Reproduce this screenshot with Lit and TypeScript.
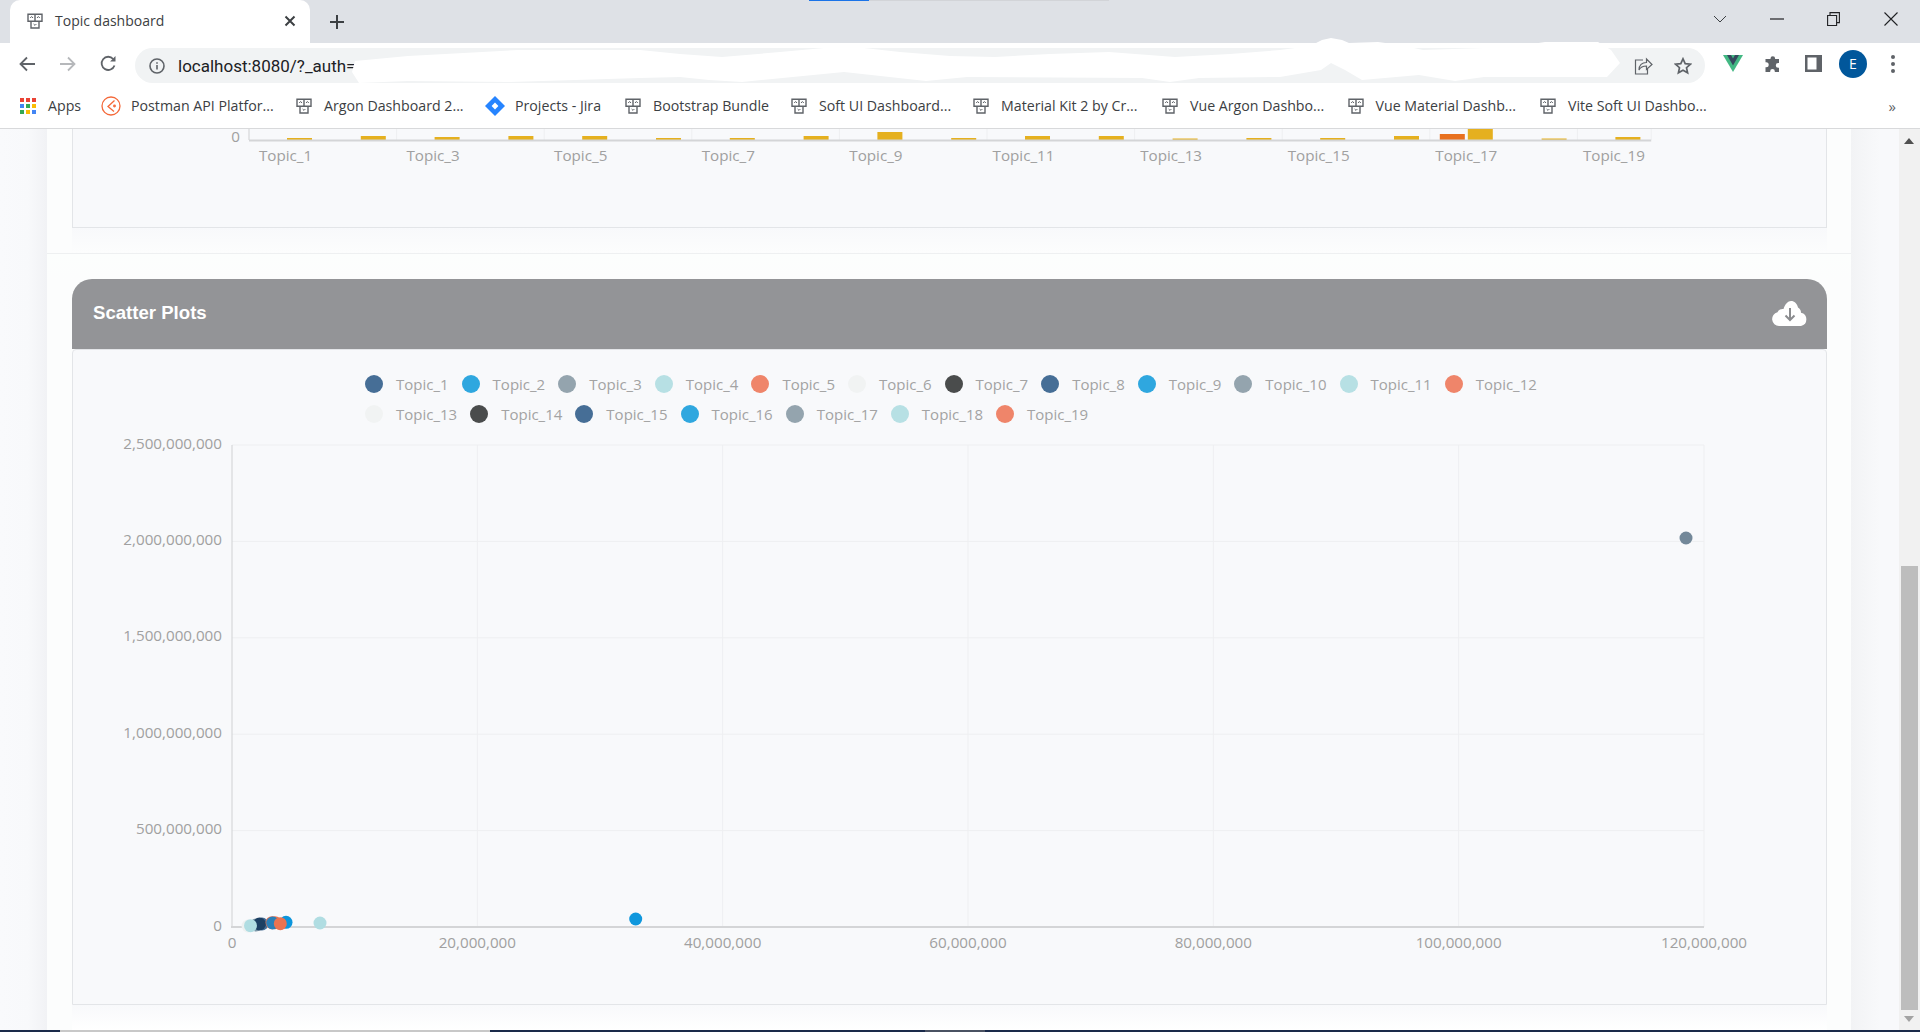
import { LitElement, html, css, svg } from 'lit';
import { customElement } from 'lit/decorators.js';

const TOPIC_COLORS = ['#466e96', '#2fa7df', '#94a4ae', '#b7e0e4', '#ef856a', '#f1f3f3', '#4a4c4c'];

// widths keep each bookmark at the same place as in the bar
const BOOKMARKS = [
  { icon: 'apps', label: 'Apps', width: 81 },
  { icon: 'postman', label: 'Postman API Platfor...', width: 195 },
  { icon: 'fav', label: 'Argon Dashboard 2...', width: 189 },
  { icon: 'jira', label: 'Projects - Jira', width: 140 },
  { icon: 'fav', label: 'Bootstrap Bundle', width: 166 },
  { icon: 'fav', label: 'Soft UI Dashboard...', width: 182 },
  { icon: 'fav', label: 'Material Kit 2 by Cr...', width: 189 },
  { icon: 'fav', label: 'Vue Argon Dashbo...', width: 185.5 },
  { icon: 'fav', label: 'Vue Material Dashb...', width: 192.5 },
  { icon: 'fav', label: 'Vite Soft UI Dashbo...', width: 180 },
];

// bar heights in px, per topic
const BAR_HEIGHTS = [2, 4, 3, 4, 4, 2, 2, 4, 8, 2, 4, 4, 1.5, 2, 2, 4, 12, 1.5, 3];

const SCATTER_POINTS = [
  [248, 926, '#eef1f1'], [256, 925, '#7d97a8'], [262, 924, '#466e96'], [259.5, 924, '#1c3f63'],
  [250.5, 925.7, '#b0dde2'], [272, 922.7, '#ea7350'], [275, 922.7, '#ea7350'], [272.7, 923, '#2a80b8'],
  [286, 922.3, '#0b95dc'], [280.3, 923.7, '#ea7350'], [320, 923, '#b0dde2'], [635.7, 919, '#0f97dd'],
  [1686, 538, '#738899'],
] as [number, number, string][];

const favicon = html`<svg class="ico16" viewBox="0 0 16 16" fill="none" stroke="#5f6368" stroke-width="1.4">
  <path d="M1 1.200h14v7H1zM8 1.200v7M4 8.200h8V15H4z"/>
  <path d="M3.200 5l1.400-1.500L6 5M10 5l1.400-1.500L12.800 5M6.600 11l1.400 1.400L9.400 11" stroke-width="1"/>
</svg>`;

const bookmarkIcons: Record<string, unknown> = {
  fav: favicon,
  apps: html`<svg class="ico16" viewBox="0 0 16 16">
    <g fill="#ea4335"><rect x="0" y="0" width="4" height="4"/><rect x="6" y="0" width="4" height="4"/><rect x="12" y="0" width="4" height="4"/></g>
    <rect x="0" y="6" width="4" height="4" fill="#4285f4"/><rect x="6" y="6" width="4" height="4" fill="#34a853"/><rect x="12" y="6" width="4" height="4" fill="#fbbc04"/>
    <rect x="0" y="12" width="4" height="4" fill="#34a853"/><rect x="6" y="12" width="4" height="4" fill="#fbbc04"/><rect x="12" y="12" width="4" height="4" fill="#4285f4"/>
  </svg>`,
  postman: html`<svg class="ico20" viewBox="0 0 20 20" fill="none" stroke="#f4693a" stroke-width="1.3">
    <circle cx="10" cy="10" r="9"/><path d="M13.500 4.500L7 10.500l6 5"/><circle cx="13.500" cy="10" r="0.800"/>
  </svg>`,
  jira: html`<svg class="ico20" viewBox="0 0 20 20">
    <path d="M10 0l10 10-10 10L0 10z" fill="#2684ff"/><path d="M10 6.600l3.400 3.400-3.400 3.400L6.600 10z" fill="#fff"/>
  </svg>`,
};

@customElement('browser-chrome')
class BrowserChrome extends LitElement {
  static styles = css`
    :host { display: block; position: relative; font-family: 'Open Sans', 'Liberation Sans', sans-serif; color: #3c4043; }
    svg { display: block; flex: none; }
    .ico16 { width: 16px; height: 16px; }
    .ico20 { width: 20px; height: 20px; }
    .tabstrip { height: 43px; background: #dee1e6; display: flex; align-items: stretch; position: relative; }
    .progress { position: absolute; left: 809px; top: 0; width: 60px; height: 1px; background: #1a73e8; }
    .progress-rest { position: absolute; left: 869px; top: 0; width: 240px; height: 1px; background: #d2d4d8; }
    .tab {
      margin-left: 10px; width: 300px; background: #fff; border-radius: 10px 10px 0 0;
      display: flex; align-items: center; box-sizing: border-box; padding: 0 14px 2px 17px;
    }
    .tab-title { margin-left: 12px; font-size: 14px; flex: 1; white-space: nowrap; }
    .plus { width: 54px; display: flex; align-items: center; justify-content: center; }
    .win { margin-left: auto; display: flex; }
    .win div { width: 57px; display: flex; align-items: center; justify-content: center; padding-bottom: 6px; }
    .win div:first-child { width: 56px; }
    .win div:last-child { width: 58px; }
    .toolbar { height: 41px; background: #fff; display: flex; align-items: center; padding-left: 6px; }
    .nav { width: 41px; display: flex; justify-content: center; }
    .omni {
      flex: 1; margin-left: 6px; height: 35px; margin-top: 5px; margin-bottom: 1px; border-radius: 18px; background: #f1f3f4;
      display: flex; align-items: center; padding: 0 2px 0 14px;
    }
    .url { margin-left: 13px; font-size: 17px; white-space: nowrap; flex: 1; color: #202124; font-family: Roboto, sans-serif; }
    .omni-ico { width: 40px; display: flex; justify-content: center; }
    .actions { display: flex; margin-left: 8px; padding-right: 7px; }
    .actions > div { width: 40px; display: flex; justify-content: center; align-items: center; }
    .avatar {
      width: 28px; height: 28px; border-radius: 50%; background: #01579b; color: #fff; font-size: 14px;
      display: flex; align-items: center; justify-content: center;
    }
    .bookmarks {
      height: 44px; box-sizing: content-box; background: #fff; border-bottom: 1px solid #d8d9db;
      display: flex; align-items: center; padding-left: 20px; position: relative;
    }
    .bm { display: flex; align-items: center; gap: 12px; flex: none; font-size: 14.2px; white-space: nowrap; }
    .bm span { position: relative; top: -1px; }
    .bm.wide { gap: 10px; }
    .more { position: absolute; right: 24px; top: 12px; font-size: 15px; color: #5f6368; }
    .blob { position: absolute; left: 0; top: 0; pointer-events: none; }
  `;

  render() {
    return html`
      <div class="tabstrip">
        <div class="progress"></div><div class="progress-rest"></div>
        <div class="tab">
          ${favicon}
          <span class="tab-title">Topic dashboard</span>
          <svg width="12" height="12" viewBox="0 0 12 12" stroke="#3c4043" stroke-width="2"><path d="M1.500 1.500l9 9M10.500 1.500l-9 9"/></svg>
        </div>
        <div class="plus"><svg width="16" height="16" viewBox="0 0 16 16" stroke="#3c4043" stroke-width="2"><path d="M8 1v14M1 8h14"/></svg></div>
        <div class="win">
          <div><svg width="14" height="8" viewBox="0 0 14 8" fill="none" stroke="#3c4043"><path d="M1 1l6 6 6-6"/></svg></div>
          <div><svg width="14" height="2" viewBox="0 0 14 2" stroke="#202124" stroke-width="1.200"><path d="M0 1h14"/></svg></div>
          <div><svg width="13" height="14" viewBox="0 0 13 14" fill="none" stroke="#202124" stroke-width="1.100"><path d="M.6 3.500h9v10h-9zM3 3.500V.6h9.400v10H9.600"/></svg></div>
          <div><svg width="14" height="14" viewBox="0 0 14 14" stroke="#202124" stroke-width="1.100"><path d="M.5.5l13 13M13.500.5l-13 13"/></svg></div>
        </div>
      </div>
      <div class="toolbar">
        <div class="nav"><svg width="16" height="16" viewBox="0 0 16 16" fill="none" stroke="#5f6368" stroke-width="1.800"><path d="M16 8H2M8 1.500L1.500 8 8 14.500"/></svg></div>
        <div class="nav"><svg width="16" height="16" viewBox="0 0 16 16" fill="none" stroke="#b6b8bb" stroke-width="1.800"><path d="M0 8h14M8 1.500L14.500 8 8 14.500"/></svg></div>
        <div class="nav"><svg width="17" height="17" viewBox="0 0 17 17" fill="none" stroke="#5f6368" stroke-width="1.800"><path d="M14.500 10.500A6.600 6.600 0 1 1 13.200 4"/><path d="M15.500 1v5.400h-5.400" fill="#5f6368" stroke="none"/></svg></div>
        <div class="omni">
          <svg width="16" height="16" viewBox="0 0 16 16" fill="none" stroke="#5f6368" stroke-width="1.600"><circle cx="8" cy="8" r="7"/><path d="M8 7v4.600M8 4.200v1.600"/></svg>
          <span class="url">localhost:8080/?_auth=</span>
          <div class="omni-ico"><svg width="19" height="18" viewBox="0 0 19 18" fill="none" stroke="#5f6368" stroke-width="1.200"><path d="M9 3H1.500v14h12v-5"/><path d="M5 13c0-5 3-7.500 7.500-7.500V2L18 7.500 12.500 12.500V9C9 9 6.500 10 5 13z"/></svg></div>
          <div class="omni-ico"><svg width="18" height="18" viewBox="0 0 18 18" fill="none" stroke="#5f6368" stroke-width="1.700"><path d="M9 1.800l2.200 4.800 5.200.6-3.900 3.500 1.100 5.100L9 13.200l-4.600 2.600 1.100-5.100L1.600 7.200l5.200-.6z"/></svg></div>
        </div>
        <div class="actions">
          <div><svg width="20" height="17" viewBox="0 0 20 17"><path d="M0 0h20L10 17z" fill="#42b883"/><path d="M4 0h4l2 3.500L12 0h4L10 10.500z" fill="#35495e"/></svg></div>
          <div><svg width="18" height="18" viewBox="0 0 18 18"><path d="M6.500 3.500a2.300 2.300 0 0 1 4.600 0V4H15v4h-.8a2.400 2.400 0 0 0 0 4.800h.8V17h-4.200v-.8a2.300 2.300 0 0 0-4.600 0v.8H1.500v-4.700h.7a2.500 2.500 0 0 0 0-5h-.7V4h5z" fill="#5f6368"/></svg></div>
          <div><svg width="17" height="17" viewBox="0 0 17 17"><rect width="17" height="17" fill="#5f6368"/><rect x="2.500" y="2.500" width="9" height="12" fill="#fff"/></svg></div>
          <div><div class="avatar">E</div></div>
          <div><svg width="4" height="18" viewBox="0 0 4 18" fill="#5f6368"><circle cx="2" cy="2" r="2"/><circle cx="2" cy="9" r="2"/><circle cx="2" cy="16" r="2"/></svg></div>
        </div>
      </div>
      <div class="bookmarks">
        ${BOOKMARKS.map(b => html`<div class="bm ${b.icon === 'postman' || b.icon === 'jira' ? 'wide' : ''}" style="width:${b.width}px">${bookmarkIcons[b.icon]}<span>${b.label}</span></div>`)}
        <span class="more">»</span>
      </div>
      <svg class="blob" width="1920" height="90" viewBox="0 0 1920 90">
        <path fill="#fff" d="M355 61 408 56 518 50 640 50 680 54 722 57 780 52 824 48 864 48 900 52 950 56 995 57 1050 54 1109 52 1175 57 1230 54 1280 50 1310 46 1322 40 1331 38 1342 40 1349 43 1378 42 1400 45 1423 50 1484 48 1520 46 1545 42 1598 42 1611 50 1620 63 1607 77 1484 77 1455 81 1419 75 1362 80 1345 70 1331 63 1321 70 1280 77 1199 78 1170 82 1142 78 967 77 926 81 844 72 742 82 709 80 680 77 640 78 510 82 408 81 359 83 352 72z"/>
      </svg>
    `;
  }
}

@customElement('bar-tail')
class BarTail extends LitElement {
  static styles = css`
    :host { display: block; }
    svg { display: block; }
    text { font: 15.2px 'Open Sans', sans-serif; fill: #a0a0a0; text-anchor: middle; }
    .zero { text-anchor: end; }
  `;

  render() {
    const left = 176;
    const step = 73.8;
    const base = 11;
    return html`<svg width="1753" height="98" viewBox="0 0 1753 98">
      ${BAR_HEIGHTS.map((_, i) => i % 2 === 0 ? svg`
        <line x1=${left + i * step} x2=${left + i * step} y1="0" y2=${base} stroke="#eeeff1"/>
        <text x=${left + i * step + 36.5} y="32">Topic_${i + 1}</text>` : '')}
      <line x1=${left + 19 * step} x2=${left + 19 * step} y1="0" y2=${base} stroke="#eeeff1"/>
      ${BAR_HEIGHTS.map((h, i) => svg`<rect x=${left + i * step + 38} y=${base - h} width="25" height=${h} fill="#e5b01f"/>`)}
      <rect x=${left + 16 * step + 10} y=${base - 6} width="25" height="6" fill="#e8711f"/>
      <line x1=${left} x2=${left + 19 * step} y1=${base + .5} y2=${base + .5} stroke="#d4d5d7" stroke-width="2"/>
      <line x1=${left} x2=${left} y1="0" y2=${base} stroke="#d4d5d7"/>
      <text class="zero" x="167" y="13">0</text>
    </svg>`;
  }
}

@customElement('scatter-chart')
class ScatterChart extends LitElement {
  static styles = css`
    :host { display: block; font-family: 'Open Sans', sans-serif; }
    svg { display: block; }
    .legend { display: flex; flex-direction: column; padding: 19px 0 1px 292px; }
    .row { display: flex; height: 30px; align-items: center; gap: 13px; }
    .item { display: flex; align-items: center; gap: 13px; font-size: 15px; color: #a3a3a3; }
    .dot { width: 18px; height: 18px; border-radius: 50%; flex: none; }
    text { font: 15.2px 'Open Sans', sans-serif; fill: #a0a0a0; }
    .y { text-anchor: end; }
    .x { text-anchor: middle; }
  `;

  renderLegendRow(from: number, to: number) {
    const items = [];
    for (let n = from; n <= to; n++) {
      items.push(html`<div class="item">
        <span class="dot" style="background:${TOPIC_COLORS[(n - 1) % 7]}"></span>Topic_${n}
      </div>`);
    }
    return html`<div class="row">${items}</div>`;
  }

  render() {
    const ox = 159;
    const oy = 497;
    const stepX = 1472 / 6;
    const stepY = 482 / 5;
    const yLabels = ['0', '500,000,000', '1,000,000,000', '1,500,000,000', '2,000,000,000', '2,500,000,000'];
    const xLabels = ['0', '20,000,000', '40,000,000', '60,000,000', '80,000,000', '100,000,000', '120,000,000'];
    return html`
      <div class="legend">${this.renderLegendRow(1, 12)}${this.renderLegendRow(13, 19)}</div>
      <svg width="1753" height="574" viewBox="0 0 1753 574">
        ${yLabels.map((l, i) => svg`
          ${i > 0 ? svg`<line x1=${ox} x2=${ox + 1472} y1=${oy - i * stepY} y2=${oy - i * stepY} stroke="#eeeff1"/>` : ''}
          <text class="y" x="149" y=${oy - i * stepY + 3.5}>${l}</text>`)}
        ${xLabels.map((l, i) => svg`
          ${i > 0 ? svg`<line x1=${ox + i * stepX} x2=${ox + i * stepX} y1=${oy - 482} y2=${oy} stroke="#eeeff1"/>` : ''}
          <text class="x" x=${ox + i * stepX} y="518">${l}</text>`)}
        <line x1=${ox} x2=${ox} y1=${oy - 482} y2=${oy} stroke="#d0d1d3"/>
        <line x1=${ox - 1} x2=${ox + 1472} y1=${oy} y2=${oy} stroke="#d4d5d7" stroke-width="2"/>
        ${SCATTER_POINTS.map(([x, y, c]) => svg`<circle cx=${x - 73} cy=${y - 430} r="6.5" fill=${c}/>`)}
      </svg>
    `;
  }
}

@customElement('app-root')
class AppRoot extends LitElement {
  static styles = css`
    :host { display: block; height: 1032px; overflow: hidden; position: relative; }
    .page { height: 901px; display: flex; overflow: hidden; background: #fff; }
    .gutter-l { width: 47px; background: linear-gradient(90deg, #f9fafc, #f8f9fb 60%, #f1f2f5); }
    .gutter-r { width: 48px; background: linear-gradient(90deg, #f2f3f5, #f8f9fb 60%, #f8f9fb); }
    .main { flex: 1; padding: 0 24px 0 25px; background: #fcfdfd; display: flex; flex-direction: column; }
    .frame { background: #f8f9fb; border: 1px solid #e3e5e8; }
    .top-frame { height: 98px; border-top: 0; flex: none; }
    .fade { height: 25px; flex: none; background: linear-gradient(#f8f9fb, #fcfdfd); }
    .divider { margin: 0 -24px 0 -25px; height: 26px; flex: none; border-top: 1px solid #eef0f1; background: linear-gradient(#fcfefd, #fcfdfd); box-sizing: border-box; }
    .head {
      height: 70px; background: #939497; border-radius: 20px 20px 0 0; flex: none;
      display: flex; align-items: center; justify-content: space-between; padding: 0 19px 0 21px;
    }
    .head h2 { margin: 0; font: bold 18.6px 'Liberation Sans', sans-serif; color: #fff; padding-bottom: 2px; }
    .head svg { margin-bottom: 2px; }
    .body { height: 654px; border-radius: 4px 4px 0 0; flex: none; }
    .bottom-fade { height: 25px; flex: none; background: linear-gradient(#f8f9fb, #fff); }
    .scroll { width: 21px; background: #f1f1f1; position: relative; }
    .thumb { position: absolute; left: 2px; right: 2px; top: 437px; height: 444px; background: #bdbdbd; }
    .arrow-up, .arrow-down { position: absolute; left: 5px; width: 0; height: 0; border-left: 5px solid transparent; border-right: 5px solid transparent; }
    .arrow-up { top: 9px; border-bottom: 6px solid #505050; }
    .arrow-down { top: 887px; border-top: 6px solid #a3a3a3; }
    .taskbar { height: 2px; background: #1a2a4a; display: flex; }
    .taskbar .light { margin-left: 60px; width: 430px; background: #c8c8c8; }
    .taskbar .app { margin-left: 435px; width: 60px; background: #4a5262; }
  `;

  render() {
    return html`
      <browser-chrome></browser-chrome>
      <div class="page">
        <div class="gutter-l"></div>
        <div class="main">
          <div class="frame top-frame"><bar-tail></bar-tail></div>
          <div class="fade"></div>
          <div class="divider"></div>
          <div class="head">
            <h2>Scatter Plots</h2>
            <svg width="36" height="25" viewBox="0 0 36 25">
              <path d="M7 25a7 7 0 0 1-1.500-13.800 6 6 0 0 1 6-3.200C13 3 16 0 19 0c3.500 0 6 2.500 7 6.500a6 6 0 0 1 3 5.200A6.800 6.800 0 0 1 29 25z" fill="#fff"/>
              <path d="M18 7v12M13.500 14.500L18 19l4.500-4.500" fill="none" stroke="#8b8c8f" stroke-width="2"/>
            </svg>
          </div>
          <div class="frame body"><scatter-chart></scatter-chart></div>
          <div class="bottom-fade"></div>
        </div>
        <div class="gutter-r"></div>
        <div class="scroll">
          <div class="arrow-up"></div><div class="thumb"></div><div class="arrow-down"></div>
        </div>
      </div>
      <div class="taskbar"><div class="light"></div><div class="app"></div></div>
    `;
  }
}
